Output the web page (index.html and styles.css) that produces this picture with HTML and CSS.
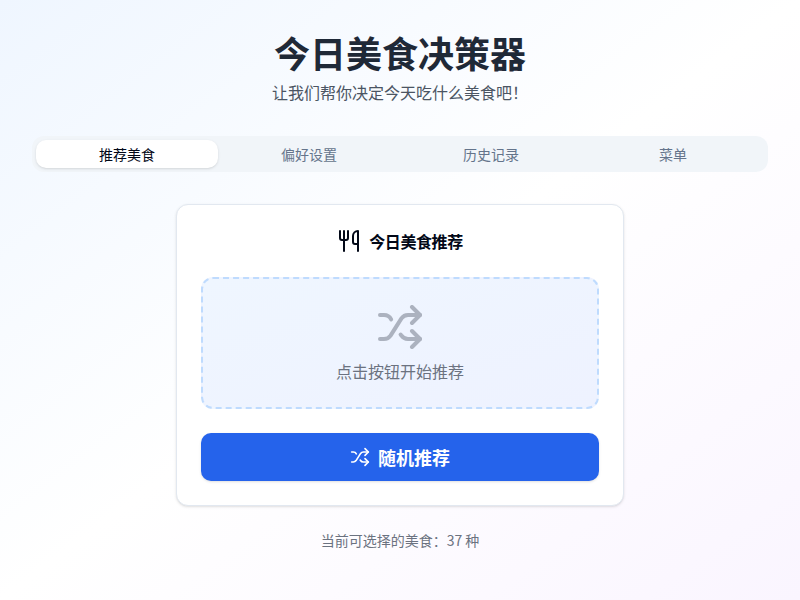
FILE: index.html
```html
<!DOCTYPE html>
<html lang="zh-CN">
<head>
    <meta charset="UTF-8">
    <meta name="viewport" content="width=device-width, initial-scale=1.0">
    <title>今日美食决策器</title>
    <link rel="stylesheet" href="styles.css">
</head>
<body>
    <div class="container">
        <div class="header">
            <h1>今日美食决策器</h1>
            <p>让我们帮你决定今天吃什么美食吧！</p>
        </div>

        <div class="tabs">
            <button class="tab active">推荐美食</button>
            <button class="tab">偏好设置</button>
            <button class="tab">历史记录</button>
            <button class="tab">菜单</button>
        </div>

        <div class="card">
            <div class="card-title">
                <svg class="icon" width="24" height="24" viewBox="0 0 24 24">
                    <path d="M3 2v7c0 1.1.9 2 2 2h4a2 2 0 0 0 2-2V2"/>
                    <path d="M7 2v20"/>
                    <path d="M21 15V2a5 5 0 0 0-5 5v6c0 1.1.9 2 2 2h3Zm0 0v7"/>
                </svg>
                <h2>今日美食推荐</h2>
            </div>

            <div class="result">
                <svg class="icon result-icon" width="48" height="48" viewBox="0 0 24 24">
                    <path d="m18 14 4 4-4 4"/>
                    <path d="m18 2 4 4-4 4"/>
                    <path d="M2 18h1.973a4 4 0 0 0 3.3-1.7l5.454-8.6a4 4 0 0 1 3.3-1.7H22"/>
                    <path d="M2 6h1.972a4 4 0 0 1 3.6 2.2"/>
                    <path d="M22 18h-6.041a4 4 0 0 1-3.3-1.8l-.359-.45"/>
                </svg>
                <p>点击按钮开始推荐</p>
            </div>

            <button class="btn">
                <svg class="icon" width="20" height="20" viewBox="0 0 24 24">
                    <path d="m18 14 4 4-4 4"/>
                    <path d="m18 2 4 4-4 4"/>
                    <path d="M2 18h1.973a4 4 0 0 0 3.3-1.7l5.454-8.6a4 4 0 0 1 3.3-1.7H22"/>
                    <path d="M2 6h1.972a4 4 0 0 1 3.6 2.2"/>
                    <path d="M22 18h-6.041a4 4 0 0 1-3.3-1.8l-.359-.45"/>
                </svg>
                随机推荐
            </button>
        </div>

        <p class="count">当前可选择的美食：37 种</p>
    </div>
</body>
</html>
```

FILE: styles.css
```css
* {
    margin: 0;
    padding: 0;
    box-sizing: border-box;
}

body {
    font-family: "Noto Sans CJK SC", sans-serif;
    line-height: 1.5;
    min-height: 100vh;
    color: #020817;
    background: linear-gradient(to bottom right, #eff6ff, #ffffff, #faf5ff);
}

.container {
    padding: 32px;
}

.header {
    text-align: center;
    margin-bottom: 32px;
}

.header h1 {
    font-size: 36px;
    line-height: 40px;
    margin-bottom: 8px;
    color: #1f2937;
}

.header p {
    color: #4b5563;
}

.tabs {
    display: grid;
    grid-template-columns: repeat(4, 1fr);
    height: 36px;
    padding: 4px;
    margin-bottom: 32px;
    border-radius: 12px;
    background: #f1f5f9;
}

.tab {
    border: none;
    border-radius: 10px;
    background: none;
    font-family: inherit;
    font-size: 14px;
    font-weight: 400;
    color: #64748b;
}

.tab.active {
    background: white;
    color: #020817;
    box-shadow: 0 1px 3px rgba(0,0,0,0.1), 0 1px 2px -1px rgba(0,0,0,0.1);
}

.card {
    width: 448px;
    margin: 0 auto;
    padding: 24px;
    border: 1px solid #e2e8f0;
    border-radius: 12px;
    background: white;
    box-shadow: 0 1px 3px rgba(0,0,0,0.1), 0 1px 2px -1px rgba(0,0,0,0.1);
}

.card-title {
    display: flex;
    align-items: center;
    justify-content: center;
    gap: 8px;
    margin-bottom: 24px;
}

.card-title h2 {
    font-size: 16px;
    line-height: 24px;
    letter-spacing: -0.025em;
}

.icon {
    display: block;
    fill: none;
    stroke: currentColor;
    stroke-width: 2;
    stroke-linecap: round;
    stroke-linejoin: round;
}

.result {
    display: flex;
    flex-direction: column;
    align-items: center;
    justify-content: center;
    gap: 8px;
    height: 132px;
    margin-bottom: 24px;
    border: 2px dashed #bfdbfe;
    border-radius: 12px;
    background: linear-gradient(to bottom right, #eff6ff, #eef2ff);
    color: #6b7280;
}

.result-icon {
    opacity: 0.5;
}

.btn {
    display: flex;
    align-items: center;
    justify-content: center;
    gap: 8px;
    width: 100%;
    height: 48px;
    border: none;
    border-radius: 10px;
    background: #2563eb;
    color: white;
    font-family: inherit;
    font-size: 18px;
    font-weight: 700;
    box-shadow: 0 1px 3px rgba(0,0,0,0.1), 0 1px 2px -1px rgba(0,0,0,0.1);
}

.count {
    margin-top: 24px;
    font-size: 14px;
    line-height: 20px;
    text-align: center;
    color: #6b7280;
}
```
